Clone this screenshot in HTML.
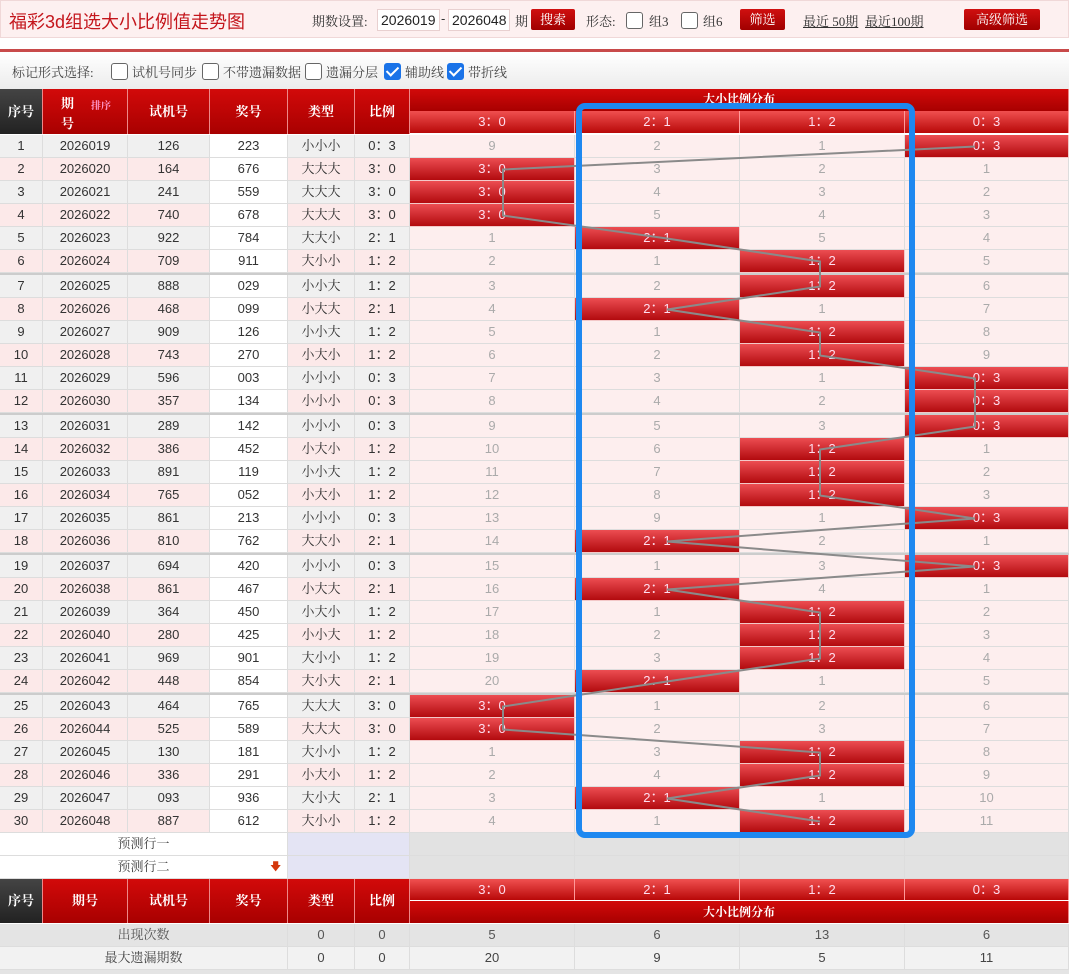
<!DOCTYPE html>
<html><head><meta charset="utf-8">
<style>
*{margin:0;padding:0;box-sizing:border-box}
body{width:1080px;height:974px;overflow:hidden;background:#fff;font-family:"Liberation Sans","Noto Sans CJK SC",sans-serif;position:relative}
.cn{font-family:"Liberation Serif","Noto Serif CJK SC",serif}
#top{position:absolute;left:0;top:0;width:1069px;height:38px;background:#fdf0f0;border:1px solid #f0d8d8}
#title{position:absolute;left:8px;top:7px;font-size:18px;color:#c4161c;font-family:"Liberation Sans","Noto Sans CJK SC",sans-serif}
.t{position:absolute;font-size:13px;color:#333}
.inp{position:absolute;top:9px;height:22px;background:#fff;border:1px solid #e8d0d0;font-size:14px;line-height:20px;padding-left:3px;color:#222}
.btn{position:absolute;top:9px;height:21px;background:linear-gradient(#d01010,#a00000);color:#fff;font-size:13px;line-height:21px;text-align:center;border-radius:2px}
.cb{position:absolute;width:17px;height:17px;border:1.5px solid #666;border-radius:3px;background:#fff}
.cb.k{background:#1a73e8;border-color:#1a73e8}
.cb.k:after{content:"";position:absolute;left:4px;top:0px;width:5px;height:10px;border:solid #fff;border-width:0 2px 2px 0;transform:rotate(45deg)}
#redline{position:absolute;left:0;top:49px;width:1069px;height:3px;background:#c84a4a}
#tool{position:absolute;left:0;top:52px;width:1069px;height:37px;background:linear-gradient(#fff,#ececec)}
.hd{position:absolute;background:linear-gradient(#d20a0a,#a80000);color:#fff;font-size:13px;text-align:center;border-right:1px solid #e88;font-weight:bold}
.hs{position:absolute;background:linear-gradient(#f05050,#b80808);color:#fde;font-size:13px;text-align:center;border-right:1px solid #f99;line-height:21px}
.r{position:absolute;left:0;width:1069px;height:23px;display:flex}
.r>i{font-style:normal;height:23px;line-height:22px;border-right:1px solid #ddd;border-bottom:1px solid #ddd;text-align:center;font-size:13px;color:#333;flex:none}
.r>i:nth-child(1){width:43px}.r>i:nth-child(2){width:85px}.r>i:nth-child(3){width:82px}.r>i:nth-child(4){width:78px;background:#fff!important}
.r>i:nth-child(5){width:67px;font-family:"Liberation Serif","Noto Serif CJK SC",serif}.r>i:nth-child(6){width:55px}
.r>i:nth-child(7),.r>i:nth-child(8),.r>i:nth-child(9){width:165px}.r>i:nth-child(10){width:164px}
.o>i{background:#f0f0f0}.e>i{background:#fce9e9}
.r>i:nth-child(n+7){background:#fdeeee;color:#aaa}
.r>i.h{background:linear-gradient(#ec4d52,#b20a0e) padding-box;color:#fde;border-bottom:1px solid #f3c8c8;border-right:1px solid #f3c8c8}
.sep{position:absolute;left:0;width:1069px;height:2px;background:#ccc}
.row2{position:absolute;left:0;width:1069px;height:23px;font-size:13px;color:#444}
.row2>div{position:absolute;top:0;height:23px;line-height:22px;text-align:center;border-right:1px solid #ddd;border-bottom:1px solid #ddd}
</style></head><body>
<div id="top">
<div id="title">福彩3d组选大小比例值走势图</div>
</div>
<div class="t cn" style="left:312px;top:11px">期数设置:</div>
<div class="inp" style="left:377px;width:63px">2026019</div>
<div class="t" style="left:441px;top:11px">-</div>
<div class="inp" style="left:448px;width:62px">2026048</div>
<div class="t cn" style="left:515px;top:11px">期</div>
<div class="btn cn" style="left:531px;width:44px">搜索</div>
<div class="t cn" style="left:586px;top:11px">形态:</div>
<div class="cb" style="left:626px;top:12px"></div>
<div class="t cn" style="left:649px;top:11px">组3</div>
<div class="cb" style="left:681px;top:12px"></div>
<div class="t cn" style="left:703px;top:11px">组6</div>
<div class="btn cn" style="left:740px;width:45px">筛选</div>
<div class="t cn" style="left:803px;top:11px;text-decoration:underline">最近 50期</div>
<div class="t cn" style="left:865px;top:11px;text-decoration:underline">最近100期</div>
<div class="btn cn" style="left:964px;width:76px">高级筛选</div>
<div id="redline"></div>
<div id="tool"></div>
<div class="t cn" style="left:12px;top:62px;color:#444">标记形式选择:</div>
<div class="cb" style="left:111px;top:63px"></div><div class="t cn" style="left:132px;top:62px;color:#444">试机号同步</div>
<div class="cb" style="left:202px;top:63px"></div><div class="t cn" style="left:223px;top:62px;color:#444">不带遗漏数据</div>
<div class="cb" style="left:305px;top:63px"></div><div class="t cn" style="left:326px;top:62px;color:#444">遗漏分层</div>
<div class="cb k" style="left:384px;top:63px"></div><div class="t cn" style="left:405px;top:62px;color:#444">辅助线</div>
<div class="cb k" style="left:447px;top:63px"></div><div class="t cn" style="left:468px;top:62px;color:#444">带折线</div>

<div class="hd cn" style="left:0;top:89px;width:43px;height:45px;line-height:45px;background:linear-gradient(#444,#222)">序号</div>
<div class="hd cn" style="left:43px;top:89px;width:85px;height:45px"><div style="position:absolute;left:18px;top:4px">期</div><div style="position:absolute;left:18px;top:24px">号</div><div style="position:absolute;left:48px;top:8px;font-size:10px;color:#f9c">排序</div></div>
<div class="hd cn" style="left:128px;top:89px;width:82px;height:45px;line-height:45px">试机号</div>
<div class="hd cn" style="left:210px;top:89px;width:78px;height:45px;line-height:45px">奖号</div>
<div class="hd cn" style="left:288px;top:89px;width:67px;height:45px;line-height:45px">类型</div>
<div class="hd cn" style="left:355px;top:89px;width:55px;height:45px;line-height:45px">比例</div>
<div class="hd cn" style="left:410px;top:89px;width:659px;height:22px;line-height:20px;font-size:12px">大小比例分布</div>
<div class="hs" style="left:410px;top:111px;width:165px;height:22px">3：0</div>
<div class="hs" style="left:575px;top:111px;width:165px;height:22px">2：1</div>
<div class="hs" style="left:740px;top:111px;width:165px;height:22px">1：2</div>
<div class="hs" style="left:905px;top:111px;width:164px;height:22px">0：3</div>

<div class="r o" style="top:135px"><i>1</i><i>2026019</i><i>126</i><i>223</i><i>小小小</i><i>0：3</i><i>9</i><i>2</i><i>1</i><i class="h">0：3</i></div>
<div class="r e" style="top:158px"><i>2</i><i>2026020</i><i>164</i><i>676</i><i>大大大</i><i>3：0</i><i class="h">3：0</i><i>3</i><i>2</i><i>1</i></div>
<div class="r o" style="top:181px"><i>3</i><i>2026021</i><i>241</i><i>559</i><i>大大大</i><i>3：0</i><i class="h">3：0</i><i>4</i><i>3</i><i>2</i></div>
<div class="r e" style="top:204px"><i>4</i><i>2026022</i><i>740</i><i>678</i><i>大大大</i><i>3：0</i><i class="h">3：0</i><i>5</i><i>4</i><i>3</i></div>
<div class="r o" style="top:227px"><i>5</i><i>2026023</i><i>922</i><i>784</i><i>大大小</i><i>2：1</i><i>1</i><i class="h">2：1</i><i>5</i><i>4</i></div>
<div class="r e" style="top:250px"><i>6</i><i>2026024</i><i>709</i><i>911</i><i>大小小</i><i>1：2</i><i>2</i><i>1</i><i class="h">1：2</i><i>5</i></div>
<div class="sep" style="top:273px"></div>
<div class="r o" style="top:275px"><i>7</i><i>2026025</i><i>888</i><i>029</i><i>小小大</i><i>1：2</i><i>3</i><i>2</i><i class="h">1：2</i><i>6</i></div>
<div class="r e" style="top:298px"><i>8</i><i>2026026</i><i>468</i><i>099</i><i>小大大</i><i>2：1</i><i>4</i><i class="h">2：1</i><i>1</i><i>7</i></div>
<div class="r o" style="top:321px"><i>9</i><i>2026027</i><i>909</i><i>126</i><i>小小大</i><i>1：2</i><i>5</i><i>1</i><i class="h">1：2</i><i>8</i></div>
<div class="r e" style="top:344px"><i>10</i><i>2026028</i><i>743</i><i>270</i><i>小大小</i><i>1：2</i><i>6</i><i>2</i><i class="h">1：2</i><i>9</i></div>
<div class="r o" style="top:367px"><i>11</i><i>2026029</i><i>596</i><i>003</i><i>小小小</i><i>0：3</i><i>7</i><i>3</i><i>1</i><i class="h">0：3</i></div>
<div class="r e" style="top:390px"><i>12</i><i>2026030</i><i>357</i><i>134</i><i>小小小</i><i>0：3</i><i>8</i><i>4</i><i>2</i><i class="h">0：3</i></div>
<div class="sep" style="top:413px"></div>
<div class="r o" style="top:415px"><i>13</i><i>2026031</i><i>289</i><i>142</i><i>小小小</i><i>0：3</i><i>9</i><i>5</i><i>3</i><i class="h">0：3</i></div>
<div class="r e" style="top:438px"><i>14</i><i>2026032</i><i>386</i><i>452</i><i>小大小</i><i>1：2</i><i>10</i><i>6</i><i class="h">1：2</i><i>1</i></div>
<div class="r o" style="top:461px"><i>15</i><i>2026033</i><i>891</i><i>119</i><i>小小大</i><i>1：2</i><i>11</i><i>7</i><i class="h">1：2</i><i>2</i></div>
<div class="r e" style="top:484px"><i>16</i><i>2026034</i><i>765</i><i>052</i><i>小大小</i><i>1：2</i><i>12</i><i>8</i><i class="h">1：2</i><i>3</i></div>
<div class="r o" style="top:507px"><i>17</i><i>2026035</i><i>861</i><i>213</i><i>小小小</i><i>0：3</i><i>13</i><i>9</i><i>1</i><i class="h">0：3</i></div>
<div class="r e" style="top:530px"><i>18</i><i>2026036</i><i>810</i><i>762</i><i>大大小</i><i>2：1</i><i>14</i><i class="h">2：1</i><i>2</i><i>1</i></div>
<div class="sep" style="top:553px"></div>
<div class="r o" style="top:555px"><i>19</i><i>2026037</i><i>694</i><i>420</i><i>小小小</i><i>0：3</i><i>15</i><i>1</i><i>3</i><i class="h">0：3</i></div>
<div class="r e" style="top:578px"><i>20</i><i>2026038</i><i>861</i><i>467</i><i>小大大</i><i>2：1</i><i>16</i><i class="h">2：1</i><i>4</i><i>1</i></div>
<div class="r o" style="top:601px"><i>21</i><i>2026039</i><i>364</i><i>450</i><i>小大小</i><i>1：2</i><i>17</i><i>1</i><i class="h">1：2</i><i>2</i></div>
<div class="r e" style="top:624px"><i>22</i><i>2026040</i><i>280</i><i>425</i><i>小小大</i><i>1：2</i><i>18</i><i>2</i><i class="h">1：2</i><i>3</i></div>
<div class="r o" style="top:647px"><i>23</i><i>2026041</i><i>969</i><i>901</i><i>大小小</i><i>1：2</i><i>19</i><i>3</i><i class="h">1：2</i><i>4</i></div>
<div class="r e" style="top:670px"><i>24</i><i>2026042</i><i>448</i><i>854</i><i>大小大</i><i>2：1</i><i>20</i><i class="h">2：1</i><i>1</i><i>5</i></div>
<div class="sep" style="top:693px"></div>
<div class="r o" style="top:695px"><i>25</i><i>2026043</i><i>464</i><i>765</i><i>大大大</i><i>3：0</i><i class="h">3：0</i><i>1</i><i>2</i><i>6</i></div>
<div class="r e" style="top:718px"><i>26</i><i>2026044</i><i>525</i><i>589</i><i>大大大</i><i>3：0</i><i class="h">3：0</i><i>2</i><i>3</i><i>7</i></div>
<div class="r o" style="top:741px"><i>27</i><i>2026045</i><i>130</i><i>181</i><i>大小小</i><i>1：2</i><i>1</i><i>3</i><i class="h">1：2</i><i>8</i></div>
<div class="r e" style="top:764px"><i>28</i><i>2026046</i><i>336</i><i>291</i><i>小大小</i><i>1：2</i><i>2</i><i>4</i><i class="h">1：2</i><i>9</i></div>
<div class="r o" style="top:787px"><i>29</i><i>2026047</i><i>093</i><i>936</i><i>大小大</i><i>2：1</i><i>3</i><i class="h">2：1</i><i>1</i><i>10</i></div>
<div class="r e" style="top:810px"><i>30</i><i>2026048</i><i>887</i><i>612</i><i>大小小</i><i>1：2</i><i>4</i><i>1</i><i class="h">1：2</i><i>11</i></div>

<div class="row2 cn" style="top:833px">
<div style="left:0;width:288px;background:#fff">预测行一</div>
<div style="left:288px;width:122px;background:#e4e4f4"></div>
<div style="left:410px;width:165px;background:#e2e2e2"></div><div style="left:575px;width:165px;background:#e2e2e2"></div><div style="left:740px;width:165px;background:#e2e2e2"></div><div style="left:905px;width:164px;background:#e2e2e2"></div>
</div>
<div class="row2 cn" style="top:856px">
<div style="left:0;width:288px;background:#fff">预测行二<span style="position:absolute;left:270px;color:#d4380d;font-size:11px">&#x1F847;</span></div>
<div style="left:288px;width:122px;background:#e4e4f4"></div>
<div style="left:410px;width:165px;background:#e2e2e2"></div><div style="left:575px;width:165px;background:#e2e2e2"></div><div style="left:740px;width:165px;background:#e2e2e2"></div><div style="left:905px;width:164px;background:#e2e2e2"></div>
</div>

<div class="hd cn" style="left:0;top:879px;width:43px;height:44px;line-height:44px;background:linear-gradient(#444,#222)">序号</div>
<div class="hd cn" style="left:43px;top:879px;width:85px;height:44px;line-height:44px">期号</div>
<div class="hd cn" style="left:128px;top:879px;width:82px;height:44px;line-height:44px">试机号</div>
<div class="hd cn" style="left:210px;top:879px;width:78px;height:44px;line-height:44px">奖号</div>
<div class="hd cn" style="left:288px;top:879px;width:67px;height:44px;line-height:44px">类型</div>
<div class="hd cn" style="left:355px;top:879px;width:55px;height:44px;line-height:44px">比例</div>
<div class="hs" style="left:410px;top:879px;width:165px;height:21px">3：0</div>
<div class="hs" style="left:575px;top:879px;width:165px;height:21px">2：1</div>
<div class="hs" style="left:740px;top:879px;width:165px;height:21px">1：2</div>
<div class="hs" style="left:905px;top:879px;width:164px;height:21px">0：3</div>
<div class="hd cn" style="left:410px;top:901px;width:659px;height:22px;line-height:22px;font-size:12px">大小比例分布</div>

<div class="row2" style="top:924px;color:#555">
<div class="cn" style="left:0;width:288px;background:#e4e4e4">出现次数</div>
<div style="left:288px;width:67px;background:#e4e4e4">0</div><div style="left:355px;width:55px;background:#e4e4e4">0</div>
<div style="left:410px;width:165px;background:#e4e4e4">5</div><div style="left:575px;width:165px;background:#e4e4e4">6</div><div style="left:740px;width:165px;background:#e4e4e4">13</div><div style="left:905px;width:164px;background:#e4e4e4">6</div>
</div>
<div class="row2" style="top:947px;color:#444">
<div class="cn" style="left:0;width:288px;background:#f2f2f2">最大遗漏期数</div>
<div style="left:288px;width:67px;background:#f2f2f2">0</div><div style="left:355px;width:55px;background:#f2f2f2">0</div>
<div style="left:410px;width:165px;background:#f2f2f2">20</div><div style="left:575px;width:165px;background:#f2f2f2">9</div><div style="left:740px;width:165px;background:#f2f2f2">5</div><div style="left:905px;width:164px;background:#f2f2f2">11</div>
</div>
<div style="position:absolute;left:0;top:970px;width:1069px;height:4px;background:#e4e4e4"></div>

<svg style="position:absolute;left:0;top:0" width="1080" height="974">
<polyline fill="none" stroke="#8a8a8a" stroke-width="2" points="975,146.5 503,169.5 503,192.5 503,215.5 667,238.5 820,261.5 820,286.5 667,309.5 820,332.5 820,355.5 975,378.5 975,401.5 975,426.5 820,449.5 820,472.5 820,495.5 975,518.5 667,541.5 975,566.5 667,589.5 820,612.5 820,635.5 820,658.5 667,681.5 503,706.5 503,729.5 820,752.5 820,775.5 667,798.5 820,821.5"/>
<rect x="579" y="106" width="333" height="729" rx="6" ry="6" fill="none" stroke="#1e88f0" stroke-width="6"/>
</svg>
</body></html>
